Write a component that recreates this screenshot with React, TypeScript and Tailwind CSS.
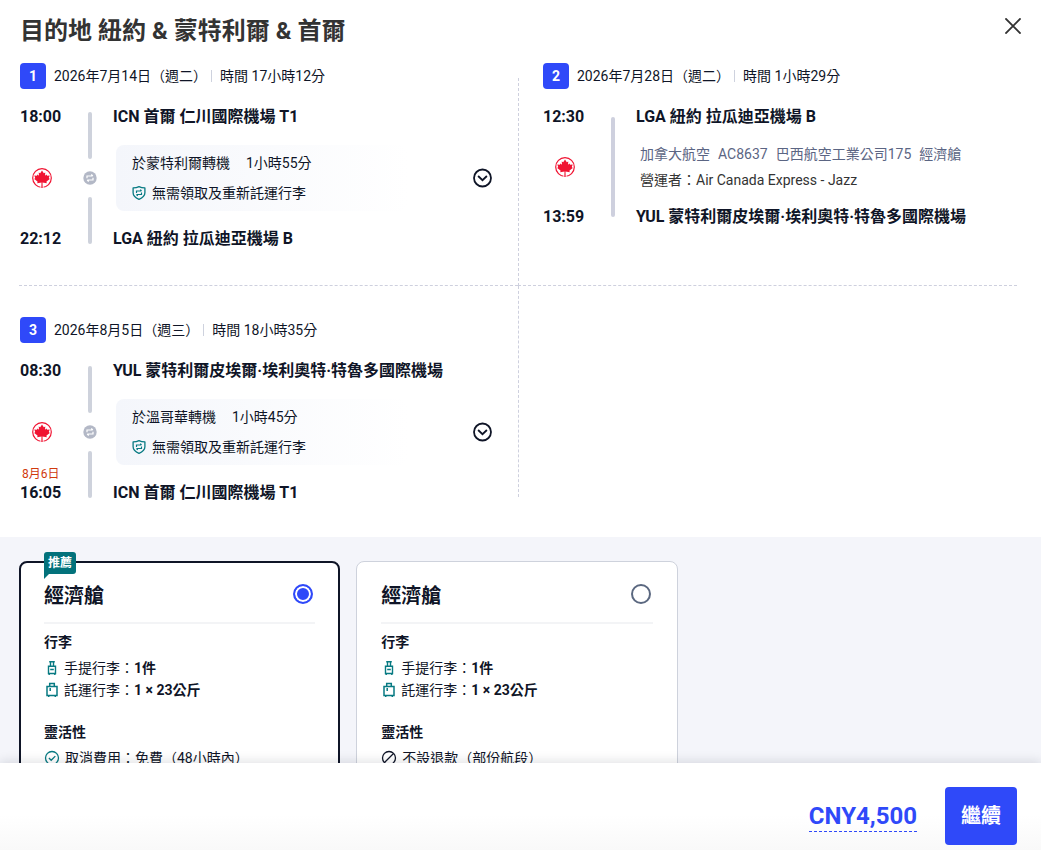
import React from 'react';

type IconProps = { className?: string };

function AirCanadaLogo() {
  return (
    <svg viewBox="0 0 40 40" className="size-5 shrink-0" role="img" aria-label="加拿大航空">
      <circle cx="20" cy="20" r="18.600" fill="none" stroke="#f01432" strokeWidth="2.400" />
      <path d="M16.800 34h6.400v6h-6.400z" fill="#fff" />
      <path
        fill="#f01432"
        d="M20 5l3.600 5.400 3-1.200-.6 6.400 2.800-2.400 1.600 2.400 5-.6-1.800 5.200 2 1.600-6.600 5.200.4 3.400-8.400-1.200.4 11h-2.800l.4-11-8.400 1.200.4-3.400-6.600-5.200 2-1.600-1.800-5.200 5 .6 1.600-2.400 2.800 2.400-.6-6.400 3 1.200z"
      />
    </svg>
  );
}

function TransferIcon() {
  return (
    <svg viewBox="0 0 28 28" className="size-3.5 shrink-0" aria-hidden="true">
      <circle cx="14" cy="14" r="13.400" fill="#b3b8c6" />
      <path
        d="M8 14.500V10h11.500M16.500 7l3.200 3M20 13.500V18H8.500M11.500 21l-3.200-3"
        fill="none"
        stroke="#fff"
        strokeWidth="2.400"
      />
    </svg>
  );
}

function ShieldIcon() {
  return (
    <svg viewBox="0 0 28 28" className="size-3.5 shrink-0" fill="none" stroke="#077a82" aria-hidden="true">
      <path
        d="M14 1.400C10.400 3.200 6.400 3.900 2.200 3.900v9.600c0 6 4.600 10.200 11.800 13.100 7.200-2.900 11.800-7.100 11.800-13.100V3.900C21.600 3.900 17.600 3.200 14 1.400z"
        strokeWidth="2.600"
        strokeLinejoin="round"
      />
      <path d="M9 14V10h10M16.500 7.400l2.600 2.600M19 13v4H9M11.500 19.600L8.900 17" strokeWidth="2.300" />
    </svg>
  );
}

function ChevronCircle() {
  return (
    <svg viewBox="0 0 20 20" className="size-5" fill="none" stroke="#0f1527" strokeWidth="1.800" aria-hidden="true">
      <circle cx="9.500" cy="10" r="8.500" />
      <path d="M5.100 8l4.400 4.200L13.900 8" />
    </svg>
  );
}

function CabinBagIcon() {
  return (
    <svg viewBox="0 0 16 16" className="size-4 shrink-0" fill="none" stroke="#077a82" strokeWidth="1.400" aria-hidden="true">
      <path d="M5.200 1.700h5.600M6.500 1.700v4.600M9.500 1.700v4.600M4.500 6.300h7v7.200h-7zM6.200 9.500h3.600M5.200 13.500v1.500M10.800 13.500v1.500" />
    </svg>
  );
}

function CheckedBagIcon() {
  return (
    <svg viewBox="0 0 16 16" className="size-4 shrink-0" fill="none" stroke="#077a82" strokeWidth="1.500" aria-hidden="true">
      <path d="M3 4.500h10v9H3zM5.700 4.500v-3h4.600v3M6.200 6v3M4.700 13.500V15M11.300 13.500V15" />
    </svg>
  );
}

function CheckCircleIcon() {
  return (
    <svg viewBox="0 0 16 16" className="size-4 shrink-0" fill="none" stroke="#077a82" strokeWidth="1.300" aria-hidden="true">
      <circle cx="8" cy="8" r="6.500" />
      <path d="M4.900 8l2.300 2.300 4.100-4.200" />
    </svg>
  );
}

function BanIcon() {
  return (
    <svg viewBox="0 0 16 16" className="size-4 shrink-0" fill="none" stroke="#0f1527" strokeWidth="1.300" aria-hidden="true">
      <circle cx="8" cy="8" r="6.500" />
      <path d="M3.500 12.500l9-9" />
    </svg>
  );
}

function CloseIcon({ className }: IconProps) {
  return (
    <svg viewBox="0 0 16 16" className={className} fill="none" stroke="#333" strokeWidth="1.900" aria-hidden="true">
      <path d="M.4.4l15.200 15.200M15.600.4L.4 15.600" />
    </svg>
  );
}

type LegHeaderProps = { index: number; date: string; duration: string };

function LegHeader({ index, date, duration }: LegHeaderProps) {
  return (
    <div className="flex items-center text-sm leading-[26px]">
      <span className="flex size-[26px] items-center justify-center rounded bg-[#2f49f9] font-bold text-white">
        {index}
      </span>
      <span className="ml-2">{date}</span>
      <span className="ml-1 h-3 w-px bg-[#ced2de]" />
      <span className="ml-2">{duration}</span>
    </div>
  );
}

type TransferLegProps = LegHeaderProps & {
  depart: string;
  from: string;
  arrive: string;
  to: string;
  nextDay?: string;
  via: string;
  wait: string;
};

function TransferLeg({ index, date, duration, depart, from, arrive, to, nextDay, via, wait }: TransferLegProps) {
  return (
    <>
      <LegHeader index={index} date={date} duration={duration} />
      <div className="mt-[15px] flex">
        <div className="relative flex w-11 flex-col items-start justify-between font-bold leading-[26px]">
          <span>{depart}</span>
          <span className="self-center">
            <AirCanadaLogo />
          </span>
          <span>{arrive}</span>
          {nextDay && (
            <span className="absolute bottom-6 left-0.5 text-xs font-normal leading-4 text-[#d03a0e]">{nextDay}</span>
          )}
        </div>
        <div className="ml-[19px] flex w-3.5 flex-col items-center gap-3 py-2">
          <span className="w-1 flex-1 rounded-sm bg-[#ced2dc]" />
          <TransferIcon />
          <span className="w-1 flex-1 rounded-sm bg-[#ced2dc]" />
        </div>
        <div className="ml-4 min-w-0 flex-1">
          <h2 className="font-bold leading-[26px]">{from}</h2>
          <div className="my-[15px] flex items-center justify-between pl-[3px] pr-[25px]">
            <div className="flex h-[66px] w-[292px] flex-col justify-between rounded-lg bg-linear-to-r from-[#f4f6fb] to-white px-4 py-2 text-sm leading-5">
              <p className="flex gap-4">
                <span>{via}</span>
                <span>{wait}</span>
              </p>
              <p className="flex items-center gap-1.5">
                <ShieldIcon />
                <span>無需領取及重新託運行李</span>
              </p>
            </div>
            <button type="button" aria-label="展開航班詳情">
              <ChevronCircle />
            </button>
          </div>
          <h2 className="font-bold leading-[26px]">{to}</h2>
        </div>
      </div>
    </>
  );
}

function DirectLeg() {
  return (
    <>
      <LegHeader index={2} date="2026年7月28日（週二）" duration="時間 1小時29分" />
      <div className="mt-[15px] flex">
        <div className="flex w-11 flex-col items-start justify-between font-bold leading-[26px]">
          <span>12:30</span>
          <span className="self-center">
            <AirCanadaLogo />
          </span>
          <span>13:59</span>
        </div>
        <div className="ml-[19px] flex w-3.5 flex-col items-center py-[13px]">
          <span className="w-1 flex-1 rounded-sm bg-[#ced0de]" />
        </div>
        <div className="ml-4 min-w-0 flex-1">
          <h2 className="font-bold leading-[26px]">LGA 紐約 拉瓜迪亞機場 B</h2>
          <div className="my-[11px] pl-1 text-sm leading-[26px]">
            <p className="flex flex-wrap gap-x-2 text-[#5b6583]">
              <span>加拿大航空</span>
              <span>AC8637</span>
              <span>巴西航空工業公司175</span>
              <span>經濟艙</span>
            </p>
            <p className="text-[#333]">營運者：Air Canada Express - Jazz</p>
          </div>
          <h2 className="font-bold leading-[26px]">YUL 蒙特利爾皮埃爾·埃利奧特·特魯多國際機場</h2>
        </div>
      </div>
    </>
  );
}

type FareCardProps = { id: string; recommended?: boolean; flexibility: React.ReactNode };

function FareCard({ id, recommended, flexibility }: FareCardProps) {
  return (
    <div className="relative rounded-lg border border-[#ced2dc] bg-white px-6 pb-6 pt-[18px] text-sm leading-[22px] has-checked:border-2 has-checked:border-[#0f1527] has-checked:px-[23px] has-checked:pt-[17px]">
      {recommended && (
        <span className="absolute -top-[11px] left-[23px] rounded-[3px] rounded-bl-none bg-[#03727b] px-1 text-xs font-bold leading-[22px] text-white">
          推薦
          <svg viewBox="0 0 5 5" className="absolute left-0 top-full size-[5px]" aria-hidden="true">
            <path d="M0 0h5L0 5z" fill="#03727b" />
          </svg>
        </span>
      )}
      <div className="flex items-start justify-between border-b-2 border-[#f3f4f6] pb-[10px]">
        <label htmlFor={id} className="text-xl font-bold leading-8">
          經濟艙
        </label>
        <input
          id={id}
          type="radio"
          name="fare"
          defaultChecked={recommended}
          className="mr-0.5 mt-1 size-5 appearance-none rounded-full border-2 border-[#5b6880] bg-white checked:border-[#2f49f9] checked:bg-[#2f49f9] checked:shadow-[inset_0_0_0_2px_white]"
        />
      </div>
      <h3 className="mt-[7px] font-bold">行李</h3>
      <p className="mt-1 flex items-center gap-1">
        <CabinBagIcon />
        <span>
          手提行李：<b>1件</b>
        </span>
      </p>
      <p className="flex items-center gap-1">
        <CheckedBagIcon />
        <span>
          託運行李：<b>1 × 23公斤</b>
        </span>
      </p>
      <h3 className="mt-5 font-bold">靈活性</h3>
      <p className="mt-1 flex items-center gap-[5px]">{flexibility}</p>
    </div>
  );
}

export default function App() {
  return (
    <div className="flex h-screen flex-col bg-white font-['Roboto','Noto_Sans_CJK_TC',sans-serif] text-base text-[#0f1527]" lang="zh-Hant">
      <main className="min-h-0 flex-1 overflow-y-auto [scrollbar-width:none]">
        <header className="flex items-start justify-between pb-[30px] pl-5 pr-5 pt-[14px]">
          <h1 className="text-2xl font-bold leading-[34px] text-[#333]">目的地 紐約 &amp; 蒙特利爾 &amp; 首爾</h1>
          <button type="button" aria-label="關閉" className="mt-1">
            <CloseIcon className="size-4" />
          </button>
        </header>

        <section className="grid grid-cols-2 pb-10 pl-[19px] pr-6">
          <div className="border-b border-dashed border-[#ced0de] pb-[33px] pl-px">
            <div className="-mt-[15px]">
              <TransferLeg
                index={1}
                date="2026年7月14日（週二）"
                duration="時間 17小時12分"
                depart="18:00"
                from="ICN 首爾 仁川國際機場 T1"
                arrive="22:12"
                to="LGA 紐約 拉瓜迪亞機場 B"
                via="於蒙特利爾轉機"
                wait="1小時55分"
              />
            </div>
          </div>
          <div className="border-b border-l border-dashed border-[#ced0de] pl-6">
            <div className="-mt-[15px]">
              <DirectLeg />
            </div>
          </div>
          <div className="pl-px pt-[31px]">
            <div className="-mb-[9px]">
              <TransferLeg
                index={3}
                date="2026年8月5日（週三）"
                duration="時間 18小時35分"
                depart="08:30"
                from="YUL 蒙特利爾皮埃爾·埃利奧特·特魯多國際機場"
                arrive="16:05"
                to="ICN 首爾 仁川國際機場 T1"
                nextDay="8月6日"
                via="於溫哥華轉機"
                wait="1小時45分"
              />
            </div>
          </div>
          <div className="border-l border-dashed border-[#ced0de]" />
        </section>

        <section className="grid grid-cols-3 gap-4 bg-[#f4f5fa] pb-10 pl-[19px] pr-[26px] pt-6">
          <FareCard
            id="fare-flexible"
            recommended
            flexibility={
              <>
                <CheckCircleIcon />
                <span>取消費用：免費（48小時內）</span>
              </>
            }
          />
          <FareCard
            id="fare-basic"
            flexibility={
              <>
                <BanIcon />
                <span>不設退款（部份航段）</span>
              </>
            }
          />
        </section>
      </main>

      <footer className="relative flex items-center justify-end gap-7 bg-linear-to-b from-white from-60% to-[#f9f9f9] pb-[5px] pl-6 pr-6 pt-6 shadow-[0_-2px_10px_rgba(15,21,39,0.12)]">
        <button type="button" className="border-b border-dashed border-[#2f49f9] text-2xl font-bold leading-[30px] text-[#2f49f9]">
          CNY4,500
        </button>
        <button type="button" className="rounded bg-[#2f49f9] px-4 text-xl font-bold leading-[58px] text-white">
          繼續
        </button>
      </footer>
    </div>
  );
}
